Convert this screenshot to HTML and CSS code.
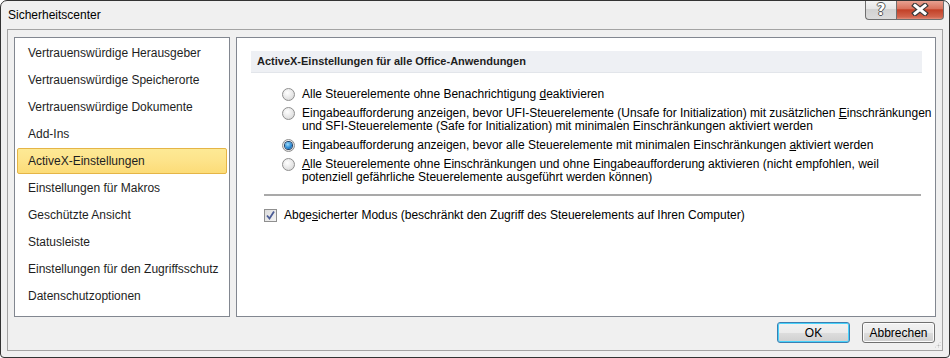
FILE: index.html
```html
<!DOCTYPE html>
<html lang="de">
<head>
  <meta charset="UTF-8">
  <title>Sicherheitscenter</title>
  <link rel="stylesheet" href="styles.css">
</head>
<body>

  <div class="window">

    <!-- title bar -->
    <div class="titlebar">
      <span class="title">Sicherheitscenter</span>
      <div class="caption-buttons">
        <div class="cap-btn help">?</div>
        <div class="cap-btn close">
          <svg width="18" height="13" viewBox="0 0 18 13">
            <path d="M4 2.5 L14 10.5 M14 2.5 L4 10.5" stroke="#3a3a3a" stroke-width="5.4" stroke-linecap="square" fill="none"/>
            <path d="M4 2.5 L14 10.5 M14 2.5 L4 10.5" stroke="#ffffff" stroke-width="3" stroke-linecap="square" fill="none"/>
          </svg>
        </div>
      </div>
    </div>

    <!-- client area -->
    <div class="client">
      <div class="main">

        <ul class="nav-list">
          <li>Vertrauenswürdige Herausgeber</li>
          <li>Vertrauenswürdige Speicherorte</li>
          <li>Vertrauenswürdige Dokumente</li>
          <li>Add-Ins</li>
          <li class="selected">ActiveX-Einstellungen</li>
          <li>Einstellungen für Makros</li>
          <li>Geschützte Ansicht</li>
          <li>Statusleiste</li>
          <li>Einstellungen für den Zugriffsschutz</li>
          <li>Datenschutzoptionen</li>
        </ul>

        <div class="panel">
          <div class="section-head">ActiveX-Einstellungen für alle Office-Anwendungen</div>

          <div class="options">
            <div class="option">
              <span class="radio"></span>
              <span class="label">Alle Steuerelemente ohne Benachrichtigung <u>d</u>eaktivieren</span>
            </div>
            <div class="option">
              <span class="radio"></span>
              <span class="label">Eingabeaufforderung anzeigen, bevor UFI-Steuerelemente (Unsafe for Initialization) mit zusätzlichen <u>E</u>inschränkungen<br>und SFI-Steuerelemente (Safe for Initialization) mit minimalen Einschränkungen aktiviert werden</span>
            </div>
            <div class="option">
              <span class="radio checked"></span>
              <span class="label">Eingabeaufforderung anzeigen, bevor alle Steuerelemente mit minimalen Einschränkungen <u>a</u>ktiviert werden</span>
            </div>
            <div class="option">
              <span class="radio"></span>
              <span class="label"><u>A</u>lle Steuerelemente ohne Einschränkungen und ohne Eingabeaufforderung aktivieren (nicht empfohlen, weil<br>potenziell gefährliche Steuerelemente ausgeführt werden können)</span>
            </div>
          </div>

          <div class="separator"></div>

          <div class="check-row">
            <span class="checkbox">
              <svg width="11" height="11" viewBox="0 0 11 11">
                <path d="M2 5.5 L4.5 8.5 L9 1.5" stroke="#4b5c96" stroke-width="1.8" fill="none"/>
              </svg>
            </span>
            <span class="label">Abge<u>s</u>icherter Modus (beschränkt den Zugriff des Steuerelements auf Ihren Computer)</span>
          </div>
        </div>

      </div>

      <div class="buttons">
        <button class="btn default">OK</button>
        <button class="btn">Abbrechen</button>
      </div>
    </div>

  </div>

</body>
</html>
```

FILE: styles.css
```css
body {
  margin: 0;
  font-family: "Liberation Sans", Arial, sans-serif;
  font-size: 12px;
  color: #000;
  background: #fff;
}

.window {
  width: 950px;
  height: 358px;
  box-sizing: border-box;
  border: 1px solid #333;
  border-radius: 7px 7px 4px 4px;
  background: #f0f0f0;
  display: flex;
  flex-direction: column;
  overflow: hidden;
}

/* title bar */
.titlebar {
  height: 28px;
  display: flex;
  align-items: flex-start;
  flex-shrink: 0;
}

.title {
  padding: 7px 0 0 7px;
  font-size: 12px;
  color: #000;
}

.caption-buttons {
  margin-left: auto;
  margin-right: 5px;
  margin-top: -1px;
  display: flex;
}

.cap-btn {
  height: 20px;
  box-sizing: border-box;
  border: 1px solid #6f6f6f;
  border-top: none;
  display: flex;
  align-items: center;
  justify-content: center;
}

.help {
  width: 31px;
  border-right: none;
  border-radius: 0 0 0 4px;
  background: linear-gradient(#f6f6f6, #e6e6e6 45%, #d2d2d2 50%, #dcdcdc);
  color: #fff;
  font-weight: bold;
  font-size: 15px;
  text-shadow: 1px 0 0 #555, -1px 0 0 #555, 0 1px 0 #555, 0 -1px 0 #555;
  font-family: "DejaVu Sans", sans-serif;
}

.close {
  width: 48px;
  border-radius: 0 0 4px 0;
  background: linear-gradient(#e9a798, #d9735e 45%, #c24128 52%, #d2654e 90%, #e2917e);
}

/* client */
.client {
  flex: 1;
  margin: 0 6px 6px 6px;
  border: 1px solid #a3a3a3;
  padding: 7px 6px 7px 6px;
  display: flex;
  flex-direction: column;
  position: relative;
}

.client::after {
  content: "";
  position: absolute;
  right: 1px;
  bottom: 2px;
  width: 7px;
  height: 7px;
  background: radial-gradient(circle, #b8b8b8 0.7px, transparent 1.2px) 0 0 / 3px 3px;
  clip-path: polygon(100% 0, 100% 100%, 0 100%);
}

.main {
  height: 280px;
  display: flex;
  gap: 6px;
}

/* left navigation */
.nav-list {
  width: 216px;
  box-sizing: border-box;
  margin: 0;
  padding: 2px 1px 0 1px;
  list-style: none;
  background: #fff;
  border: 1px solid #828790;
}

.nav-list li {
  height: 26px;
  margin: 0 1px 1px 1px;
  padding-left: 10px;
  border: 1px solid transparent;
  box-sizing: border-box;
  display: flex;
  align-items: center;
  color: #1e1e1e;
  border-radius: 2px;
}

.nav-list li.selected {
  background: linear-gradient(#fde995, #fde38a 50%, #fcdc78);
  border-color: #e5b546;
}

/* right panel */
.panel {
  flex: 1;
  min-width: 0;
  background: #fff;
  border: 1px solid #828790;
  padding: 13px 13px 0 14px;
}

.section-head {
  height: 21px;
  line-height: 21px;
  padding-left: 6px;
  background: #eef0f4;
  border-bottom: 1px solid #e2e5ea;
  font-weight: bold;
  font-size: 11px;
  color: #1e1e1e;
}

.options {
  padding: 15px 0 0 31px;
  display: flex;
  flex-direction: column;
  gap: 6px;
}

.option {
  display: flex;
  align-items: flex-start;
  line-height: 13px;
}

.label {
  white-space: nowrap;
}

.radio {
  width: 13px;
  height: 13px;
  box-sizing: border-box;
  border-radius: 50%;
  border: 1px solid #8f8f8f;
  background: radial-gradient(circle at 40% 35%, #ffffff, #e4e4e4 60%, #cfcfcf);
  margin-right: 7px;
  flex-shrink: 0;
  display: flex;
  align-items: center;
  justify-content: center;
}

.radio.checked::after {
  content: "";
  width: 7px;
  height: 7px;
  border-radius: 50%;
  background: radial-gradient(circle at 40% 35%, #9fdcfb, #2a8bd6 55%, #124a8c);
  box-shadow: 0 0 0 1px #1d3f66;
}

.separator {
  margin: 10px 1px 0 13px;
  height: 0;
  border-top: 2px solid #a9a9a9;
}

.check-row {
  display: flex;
  align-items: center;
  padding: 12px 0 0 13px;
}

.checkbox {
  width: 13px;
  height: 13px;
  box-sizing: border-box;
  border: 1px solid #8f8f8f;
  background: linear-gradient(135deg, #dcdcdc, #f4f4f4);
  margin-right: 7px;
  display: flex;
  align-items: center;
  justify-content: center;
}

/* bottom buttons */
.buttons {
  margin-top: 5px;
  display: flex;
  justify-content: flex-end;
  gap: 12px;
  padding-right: 1px;
}

.btn {
  width: 73px;
  height: 21px;
  font-family: "Liberation Sans", Arial, sans-serif;
  font-size: 12px;
  color: #000;
  border: 1px solid #707070;
  border-radius: 3px;
  background: linear-gradient(#f2f2f2, #ebebeb 50%, #dddddd 51%, #cfcfcf);
  box-shadow: inset 0 0 0 1px #fcfcfc;
  padding: 0;
}

.btn.default {
  border-color: #3c7fb1;
  box-shadow: inset 0 0 0 1px #48d2fb;
}
```
